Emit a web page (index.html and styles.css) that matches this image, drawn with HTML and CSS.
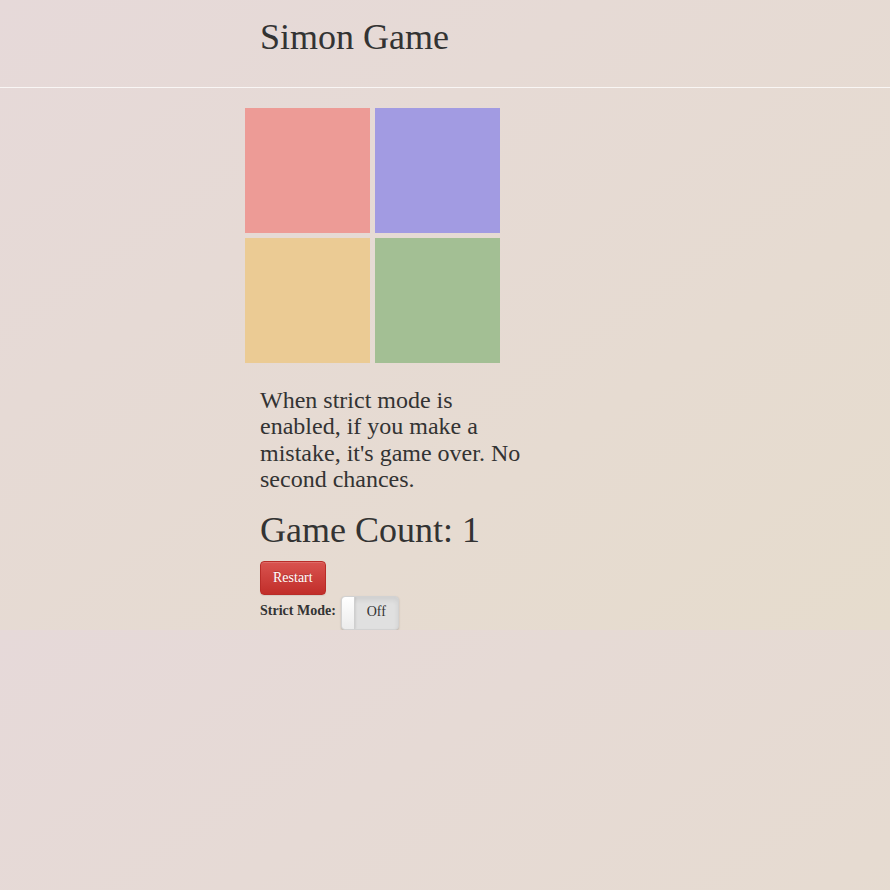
FILE: index.html
```html
<!DOCTYPE html>
<html lang="en">
<head>
<meta charset="utf-8">
<title>Simon Game</title>
<link rel="stylesheet" href="styles.css">
</head>
<body>
<header class="top">
  <h1 class="title">Simon Game</h1>
</header>
<main class="game">
  <div class="board">
    <div class="pad pad-red"></div>
    <div class="pad pad-blue"></div>
    <div class="pad pad-yellow"></div>
    <div class="pad pad-green"></div>
  </div>
  <div class="info">
    <h3 class="note">When strict mode is enabled, if you make a mistake, it's game over. No second chances.</h3>
    <h1 class="count">Game Count: 1</h1>
    <div class="actions">
      <button class="btn-restart" type="button">Restart</button>
    </div>
    <div class="strict-row">
      <label class="strict-label">Strict Mode:</label>
      <div class="toggle">
        <span class="toggle-handle"></span>
        <span class="toggle-off">Off</span>
      </div>
    </div>
  </div>
</main>
</body>
</html>
```
FILE: styles.css
```css
html {
  margin: 0;
}
body {
  margin: 0;
  font-family: "Liberation Serif", "Times New Roman", serif;
  color: #333;
  background: linear-gradient(to bottom right, #e6d9d9, #e6dccd);
}
.top {
  box-sizing: border-box;
  height: 88px;
  padding: 18px 0 0 260px;
  border-bottom: 1px solid rgba(255, 255, 255, 0.75);
}
.title {
  margin: 0;
  font-size: 36px;
  line-height: 39.6px;
  font-weight: normal;
}
.game {
  padding-left: 245px;
  padding-top: 20px;
}
.board {
  display: grid;
  grid-template-columns: 125px 125px;
  grid-template-rows: 125px 125px;
  gap: 5px;
}
.pad-red { background: #ed9b96; }
.pad-blue { background: #a29be2; }
.pad-yellow { background: #ebcb94; }
.pad-green { background: #a3bf94; }
.info {
  padding-left: 15px;
  width: 270px;
}
.note {
  margin: 24px 0 18px;
  font-size: 24px;
  line-height: 26.4px;
  font-weight: normal;
}
.count {
  margin: 0 0 11px;
  font-size: 36px;
  line-height: 39.6px;
  font-weight: normal;
}
.actions {
  height: 35px;
}
.btn-restart {
  height: 34px;
  padding: 6px 12px;
  font-family: "Liberation Serif", "Times New Roman", serif;
  font-size: 14px;
  line-height: 20px;
  color: #fff;
  text-shadow: 0 -1px 0 rgba(0, 0, 0, 0.2);
  background: linear-gradient(to bottom, #d9534f, #c12e2a);
  border: 1px solid #b92c28;
  border-radius: 4px;
  box-shadow: inset 0 1px 0 rgba(255, 255, 255, 0.15), 0 1px 1px rgba(0, 0, 0, 0.075);
}
.strict-row {
  display: flex;
  align-items: center;
  gap: 5px;
}
.strict-label {
  font-size: 14px;
  font-weight: bold;
  line-height: 20px;
  margin-top: -5px;
}
.toggle {
  position: relative;
  width: 58px;
  height: 34px;
  box-sizing: border-box;
  border-radius: 4px;
  border: 1px solid #d2d2d2;
  background: #e0e0e0;
  box-shadow: 0 1px 2px rgba(0, 0, 0, 0.18), inset 0 3px 5px rgba(0, 0, 0, 0.08);
  display: flex;
  overflow: hidden;
}
.toggle-handle {
  width: 12px;
  height: 100%;
  background: linear-gradient(to bottom, #ffffff, #ececec);
  border-right: 1px solid #cfcfcf;
  border-radius: 3px 0 0 3px;
  box-shadow: 1px 0 2px rgba(0, 0, 0, 0.08);
}
.toggle-off {
  flex: 1;
  text-align: center;
  font-size: 14px;
  line-height: 30px;
  color: #333;
}
```
